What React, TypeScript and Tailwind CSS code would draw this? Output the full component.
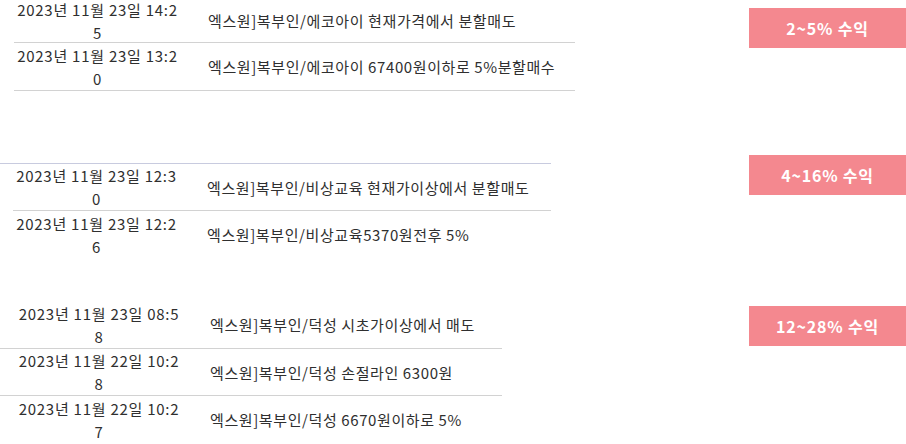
const font = { fontFamily: '"Noto Sans CJK KR", "Noto Sans", sans-serif' };

type Row = { d1: string; d2: string; text: string; h: string };

const groups: {
  badge: string;
  badgeCls: string;
  tableCls: string;
  rowCls: string;
  dateCls: string;
  textCls: string;
  rows: Row[];
}[] = [
  {
    badge: '2~5% 수익',
    badgeCls: 'mt-[8px]',
    tableCls: 'w-[575px] -mt-[1px]',
    rowCls: 'ml-[14px] border-b border-[#d2d2d2]',
    dateCls: 'w-[167px]',
    textCls: 'pl-[27px]',
    rows: [
      { d1: '2023년 11월 23일 14:2', d2: '5', text: '엑스원]복부인/에코아이 현재가격에서 분할매도', h: 'h-[44px]' },
      { d1: '2023년 11월 23일 13:2', d2: '0', text: '엑스원]복부인/에코아이 67400원이하로 5%분할매수', h: 'h-[48px]' },
    ],
  },
  {
    badge: '4~16% 수익',
    badgeCls: 'mt-0',
    tableCls: 'w-[551px] mt-[8px] border-t border-[#c8cbdf]',
    rowCls: 'ml-[13px] border-b border-[#d2d2d2] last:border-b-0',
    dateCls: 'w-[167px]',
    textCls: 'pl-[27px]',
    rows: [
      { d1: '2023년 11월 23일 12:3', d2: '0', text: '엑스원]복부인/비상교육 현재가이상에서 분할매도', h: 'h-[47px]' },
      { d1: '2023년 11월 23일 12:2', d2: '6', text: '엑스원]복부인/비상교육5370원전후 5%', h: 'h-[47px]' },
    ],
  },
  {
    badge: '12~28% 수익',
    badgeCls: 'mt-[5px]',
    tableCls: 'w-[502px]',
    rowCls: 'border-b border-[#d2d2d2] last:border-b-0',
    dateCls: 'w-[198px]',
    textCls: 'pl-[12px]',
    rows: [
      { d1: '2023년 11월 23일 08:5', d2: '8', text: '엑스원]복부인/덕성 시초가이상에서 매도', h: 'h-[48px]' },
      { d1: '2023년 11월 22일 10:2', d2: '8', text: '엑스원]복부인/덕성 손절라인 6300원', h: 'h-[47px]' },
      { d1: '2023년 11월 22일 10:2', d2: '7', text: '엑스원]복부인/덕성 6670원이하로 5%', h: 'h-[47px]' },
    ],
  },
];

const gaps = ['', 'mt-[64px]', 'mt-[43px]'];

export default function App() {
  return (
    <div className="w-[906px] h-[444px] overflow-hidden bg-white text-[#2f2f2f]" style={font}>
      {groups.map((g, gi) => (
        <div key={gi} className={`flex items-start justify-between ${gaps[gi]}`}>
          <div className={g.tableCls}>
            {g.rows.map((r, ri) => (
              <div key={ri} className={`flex items-center ${g.rowCls} ${r.h}`}>
                <div className={`${g.dateCls} shrink-0 text-center text-[15px] leading-[23px] tracking-[0.75px]`}>
                  <div>{r.d1}</div>
                  <div>{r.d2}</div>
                </div>
                <div className={`${g.textCls} text-[15px] leading-[23px] tracking-[0.6px] whitespace-nowrap`}>{r.text}</div>
              </div>
            ))}
          </div>
          <div
            className={`${g.badgeCls} w-[157px] h-[40px] bg-[#f4888f] text-white font-bold text-[16px] tracking-[0.8px] flex items-center justify-center`}
          >
            {g.badge}
          </div>
        </div>
      ))}
    </div>
  );
}
